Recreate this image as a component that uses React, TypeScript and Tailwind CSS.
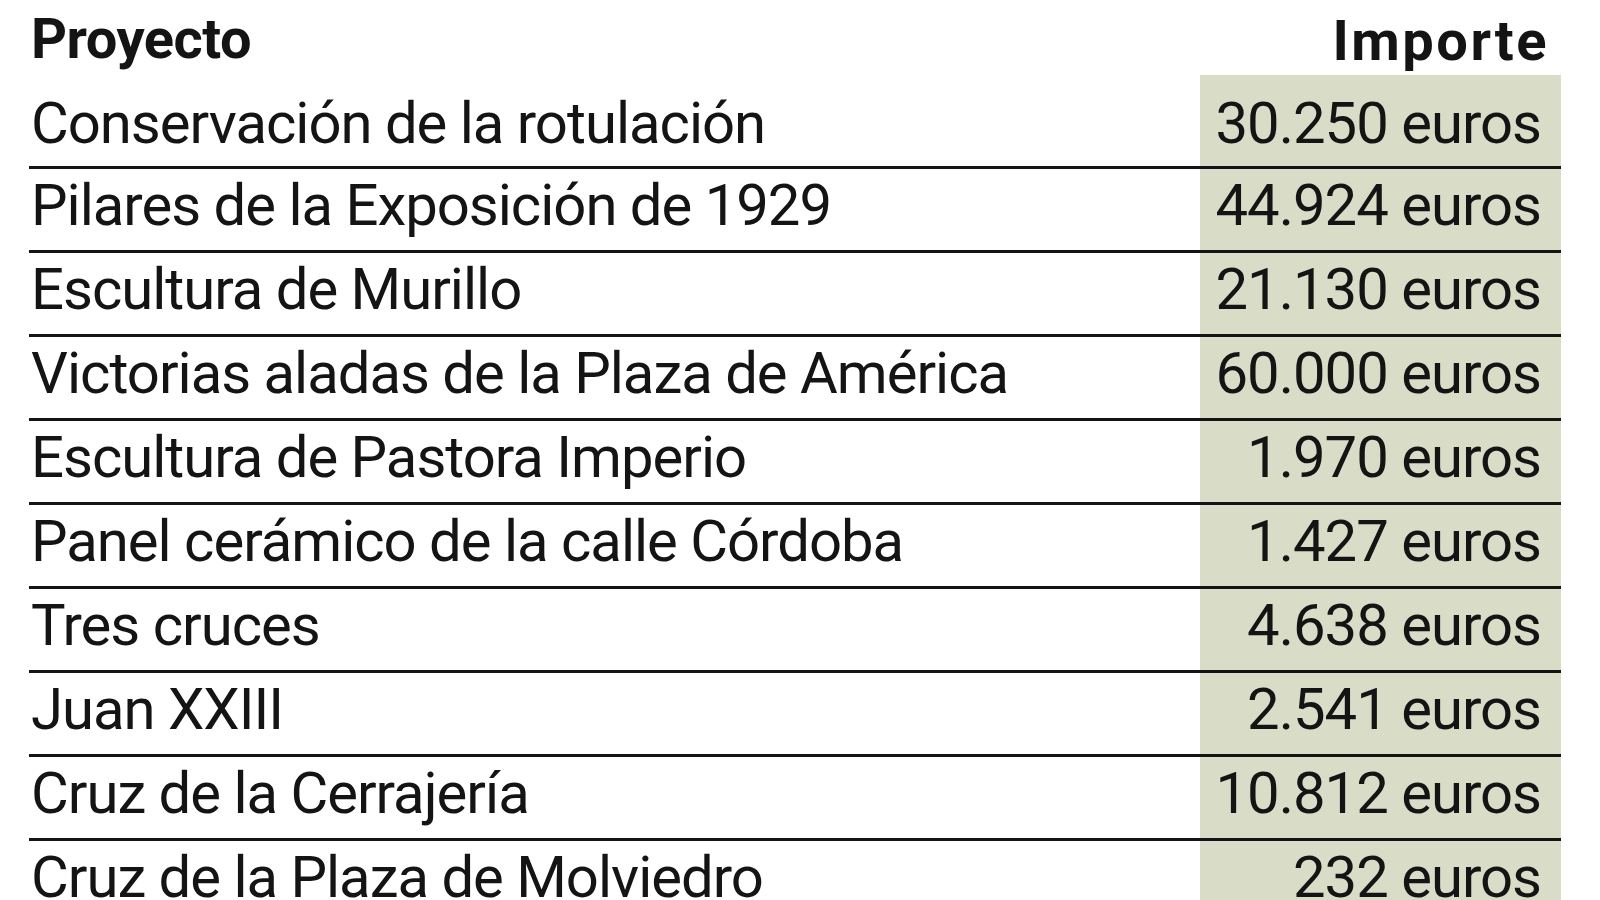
import React from "react";

const rows: [string, string][] = [
  ["Conservación de la rotulación", "30.250 euros"],
  ["Pilares de la Exposición de 1929", "44.924 euros"],
  ["Escultura de Murillo", "21.130 euros"],
  ["Victorias aladas de la Plaza de América", "60.000 euros"],
  ["Escultura de Pastora Imperio", "1.970 euros"],
  ["Panel cerámico de la calle Córdoba", "1.427 euros"],
  ["Tres cruces", "4.638 euros"],
  ["Juan XXIII", "2.541 euros"],
  ["Cruz de la Cerrajería", "10.812 euros"],
  ["Cruz de la Plaza de Molviedro", "232 euros"],
];

export default function App() {
  return (
    <div
      className="w-[1600px] h-[900px] overflow-hidden bg-white text-[#141414]"
      style={{ fontFamily: "Roboto, 'Liberation Sans', sans-serif" }}
    >
      <div className="ml-[29px] w-[1532px] flex flex-col">
        <div className="flex h-[75px]">
          <div className="flex-1 pl-[2px] pt-[11px] text-[56px] leading-none font-bold tracking-[-0.5px]">
            Proyecto
          </div>
          <div className="w-[361px] pr-[12px] pt-[13px] text-right text-[56px] leading-none font-bold tracking-[2.5px]">
            Importe
          </div>
        </div>
        {rows.map(([name, amount], i) => (
          <div
            key={name}
            className={`flex border-b-[3px] border-[#141414] ${i === 0 ? "h-[94px]" : "h-[84px]"}`}
          >
            <div
              className={`flex-1 pl-[2px] text-[58px] leading-none tracking-[-1px] ${i === 0 ? "pt-[19px]" : "pt-[7px]"}`}
            >
              {name}
            </div>
            <div
              className={`w-[361px] bg-[#d9dcc7] pr-[20px] text-right text-[58px] leading-none tracking-[-1px] ${i === 0 ? "pt-[19px]" : "pt-[7px]"}`}
            >
              {amount}
            </div>
          </div>
        ))}
      </div>
    </div>
  );
}
